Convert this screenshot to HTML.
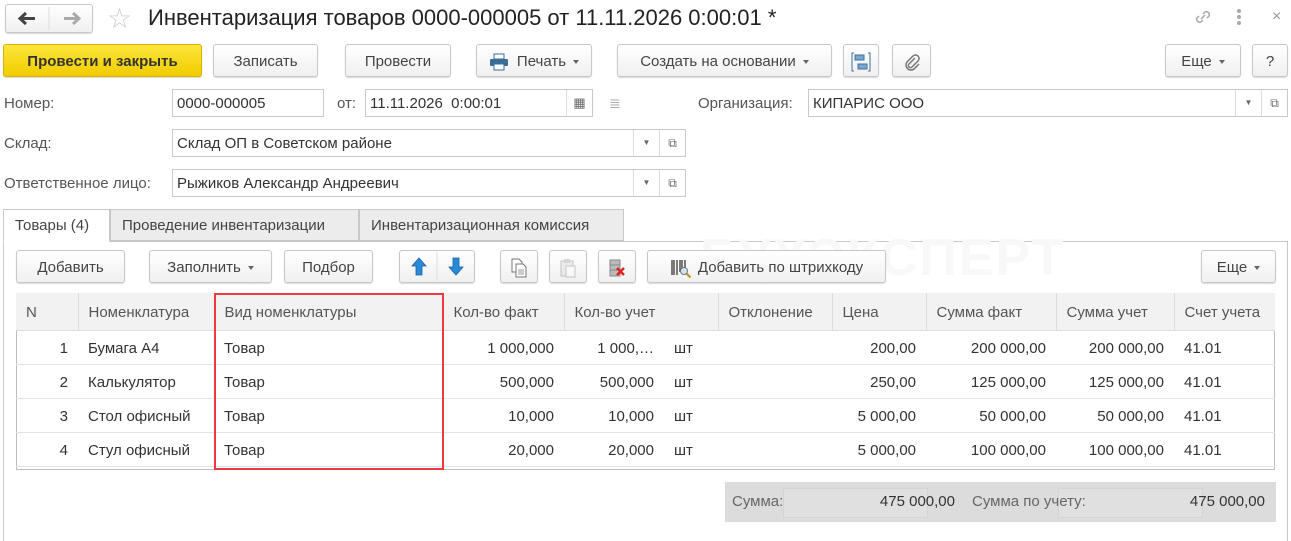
<!DOCTYPE html>
<html><head><meta charset="utf-8"><style>
*{box-sizing:border-box;margin:0;padding:0}
body{width:1291px;height:518px;overflow:hidden;background:#fff;font-family:"Liberation Sans",sans-serif;font-size:15px;color:#333;position:relative}
.a{position:absolute}
.btn{position:absolute;border:1px solid #c8c8c8;border-radius:3px;background:linear-gradient(#fff,#f0f0f0);box-shadow:0 1px 1px rgba(0,0,0,.15);color:#444;display:flex;align-items:center;justify-content:center;white-space:nowrap;padding-top:2px}
.inp{position:absolute;border:1px solid #c9c9c9;height:28px;line-height:28px;padding-left:4px;color:#333;background:#fff}
.lbl{position:absolute;color:#555;line-height:30px}
.dd{position:absolute;top:0;width:26px;height:26px;border-left:1px solid #ddd;text-align:center;font-size:8px;color:#666;line-height:26px}
.tri{display:inline-block;border-left:3px solid transparent;border-right:3px solid transparent;border-top:4px solid #666;vertical-align:middle;margin-left:7px}
table{border-collapse:collapse;position:absolute;left:16px;top:293px;width:1259px;table-layout:fixed}
td,th{height:34px;border-bottom:1px solid #e3e3e3;white-space:nowrap;overflow:hidden;padding:2px 10px 0;font-weight:normal}
th{background:#f2f2f2;color:#555;text-align:left;height:37px;border-right:1px solid #ddd;border-bottom:1px solid #ddd}
td{color:#333}
.r{text-align:right}
</style></head><body>
<!-- title -->
<div class="btn" style="left:5px;top:4px;width:88px;height:29px;padding:0">
<svg width="86" height="27"><path d="M43 2v23" stroke="#ddd"/><path d="M29 13.5H15M20 8l-6 5.5 6 5.5" stroke="#444" stroke-width="3" fill="none"/><path d="M58 13.5h14M67 8l6 5.5-6 5.5" stroke="#aaa" stroke-width="3" fill="none"/></svg></div>
<div class="a" style="left:107px;top:2px;font-size:28px;color:#ccc">☆</div>
<div class="a" style="left:148px;top:5px;font-size:22px;color:#222">Инвентаризация товаров 0000-000005 от 11.11.2026 0:00:01 *</div>
<svg class="a" style="left:1193px;top:7px" width="20" height="20"><path d="M8 12l4-4M6 9l-2 2a3 3 0 004 4l2-2M14 11l2-2a3 3 0 00-4-4l-2 2" stroke="#aaa" stroke-width="1.5" fill="none"/></svg>
<div class="a" style="left:1237px;top:9px;width:4px;height:4px;background:#aaa;border-radius:2px;box-shadow:0 6px 0 #aaa,0 12px 0 #aaa"></div>
<div class="a" style="left:1272px;top:8px;font-size:16px;color:#999">×</div>
<!-- toolbar -->
<div class="btn" style="left:3px;top:44px;width:199px;height:33px;background:linear-gradient(#fde63a,#f0cc00);border-color:#d4b400;font-weight:bold;color:#333">Провести и закрыть</div>
<div class="btn" style="left:213px;top:44px;width:105px;height:33px">Записать</div>
<div class="btn" style="left:345px;top:44px;width:106px;height:33px">Провести</div>
<div class="btn" style="left:476px;top:44px;width:116px;height:33px"><svg width="20" height="18" style="margin-right:8px"><rect x="5" y="1" width="10" height="5" fill="#fff" stroke="#3a6d9a"/><rect x="1" y="6" width="18" height="7" rx="1" fill="#3a6d9a"/><rect x="5" y="11" width="10" height="6" fill="#fff" stroke="#3a6d9a"/></svg>Печать<span class="tri"></span></div>
<div class="btn" style="left:617px;top:44px;width:215px;height:33px">Создать на основании<span class="tri"></span></div>
<div class="btn" style="left:843px;top:44px;width:36px;height:33px"><svg width="20" height="20" viewBox="0 0 20 20"><rect x="4" y="3" width="9" height="5" fill="#7aa7d1" stroke="#3d6f9c"/><rect x="7" y="12" width="9" height="5" fill="#7aa7d1" stroke="#3d6f9c"/><path d="M3 1H1v18h2M17 1h2v18h-2" stroke="#3d6f9c" fill="none"/></svg></div>
<div class="btn" style="left:892px;top:44px;width:39px;height:33px"><svg width="18" height="18"><path d="M12 5l-6 6a2 2 0 003 3l6-6a3.5 3.5 0 00-5-5l-6 6a5 5 0 007 7l5-5" stroke="#777" stroke-width="1.5" fill="none"/></svg></div>
<div class="btn" style="left:1165px;top:44px;width:76px;height:33px">Еще<span class="tri"></span></div>
<div class="btn" style="left:1252px;top:44px;width:36px;height:33px">?</div>
<!-- fields -->
<div class="lbl" style="left:4px;top:89px">Номер:</div>
<div class="inp" style="left:172px;top:89px;width:152px">0000-000005</div>
<div class="lbl" style="left:337px;top:89px">от:</div>
<div class="inp" style="left:365px;top:89px;width:228px">11.11.2026&nbsp; 0:00:01<div class="dd" style="right:0;font-size:13px">▦</div></div>
<div class="a" style="left:609px;top:95px;color:#aaa;font-size:14px">≣</div>
<div class="lbl" style="left:698px;top:89px">Организация:</div>
<div class="inp" style="left:808px;top:89px;width:480px">КИПАРИС ООО<div class="dd" style="right:26px">▼</div><div class="dd" style="right:0;font-size:12px">⧉</div></div>
<div class="lbl" style="left:4px;top:129px">Склад:</div>
<div class="inp" style="left:172px;top:129px;width:514px">Склад ОП в Советском районе<div class="dd" style="right:26px">▼</div><div class="dd" style="right:0;font-size:12px">⧉</div></div>
<div class="lbl" style="left:4px;top:169px">Ответственное лицо:</div>
<div class="inp" style="left:172px;top:169px;width:514px">Рыжиков Александр Андреевич<div class="dd" style="right:26px">▼</div><div class="dd" style="right:0;font-size:12px">⧉</div></div>
<!-- tabs -->
<div class="a" style="left:3px;top:241px;width:1285px;height:300px;border:1px solid #c8c8c8;border-bottom:none"></div>
<div class="a" style="left:700px;top:228px;font-size:52px;font-weight:bold;color:#f8f8f8;letter-spacing:2px">БУХЭКСПЕРТ</div>
<div class="a" style="left:3px;top:209px;width:107px;height:33px;border:1px solid #c8c8c8;border-bottom:1px solid #fff;background:#fff;line-height:32px;padding-left:11px;color:#444">Товары (4)</div>
<div class="a" style="left:110px;top:209px;width:249px;height:32px;border:1px solid #c8c8c8;background:#ececec;line-height:32px;padding-left:11px;color:#444">Проведение инвентаризации</div>
<div class="a" style="left:359px;top:209px;width:265px;height:32px;border:1px solid #c8c8c8;background:#ececec;line-height:32px;padding-left:11px;color:#444">Инвентаризационная комиссия</div>
<!-- table toolbar -->
<div class="btn" style="left:16px;top:250px;width:109px;height:33px">Добавить</div>
<div class="btn" style="left:149px;top:250px;width:123px;height:33px">Заполнить<span class="tri"></span></div>
<div class="btn" style="left:284px;top:250px;width:89px;height:33px">Подбор</div>
<div class="btn" style="left:399px;top:250px;width:76px;height:33px;padding:0"><svg width="74" height="31"><path d="M37 1v29" stroke="#ddd"/><path d="M19 7l-7 8h4v9h6v-9h4z" fill="#2b8ad8" stroke="#1a5e9e" stroke-width=".8"/><path d="M56 24l-7-8h4V7h6v9h4z" fill="#2b8ad8" stroke="#1a5e9e" stroke-width=".8"/></svg></div>
<div class="btn" style="left:500px;top:250px;width:38px;height:33px"><svg width="18" height="20"><path d="M2 1h7l3 3v10H2z" fill="#fff" stroke="#777"/><path d="M6 6h7l3 3v10H6z" fill="#fff" stroke="#777"/><path d="M8 12h6M8 14h6M8 16h6" stroke="#999"/></svg></div>
<div class="btn" style="left:549px;top:250px;width:38px;height:33px"><svg width="18" height="20" opacity=".45"><rect x="2" y="3" width="12" height="15" fill="#ddd" stroke="#888"/><rect x="5" y="1" width="6" height="4" fill="#aaa"/><rect x="7" y="8" width="9" height="11" fill="#fff" stroke="#888"/></svg></div>
<div class="btn" style="left:598px;top:250px;width:38px;height:33px"><svg width="20" height="20"><rect x="3" y="2" width="10" height="16" fill="#bbb" stroke="#888"/><path d="M3 7h10M3 12h10" stroke="#888"/><path d="M10 10l7 7M17 10l-7 7" stroke="#d22" stroke-width="2.5"/></svg></div>
<div class="btn" style="left:647px;top:250px;width:239px;height:33px"><svg width="22" height="20" style="margin-right:6px"><path d="M2 2v15M4 2v15M7 2v15M10 2v12M12 2v10M15 2v10" stroke="#444" stroke-width="1.4"/><circle cx="14" cy="13" r="3.5" fill="#cfe3f5" stroke="#777"/><path d="M16.5 15.5l4 4" stroke="#c8862a" stroke-width="2"/></svg>Добавить по штрихкоду</div>
<div class="btn" style="left:1201px;top:250px;width:75px;height:33px">Еще<span class="tri"></span></div>
<!-- table -->
<div class="a" style="left:16px;top:293px;width:1259px;height:177px;border:1px solid #bdbdbd"></div>
<table>
<colgroup><col style="width:62px"><col style="width:136px"><col style="width:229px"><col style="width:121px"><col style="width:100px"><col style="width:54px"><col style="width:114px"><col style="width:94px"><col style="width:130px"><col style="width:118px"><col style="width:101px"></colgroup>
<tr><th>N</th><th>Номенклатура</th><th>Вид номенклатуры</th><th>Кол-во факт</th><th colspan="2">Кол-во учет</th><th>Отклонение</th><th>Цена</th><th>Сумма факт</th><th>Сумма учет</th><th style="border-right:none">Счет учета</th></tr>
<tr><td class="r">1</td><td>Бумага А4</td><td>Товар</td><td class="r">1 000,000</td><td class="r">1 000,…</td><td>шт</td><td></td><td class="r">200,00</td><td class="r">200 000,00</td><td class="r">200 000,00</td><td>41.01</td></tr>
<tr><td class="r">2</td><td>Калькулятор</td><td>Товар</td><td class="r">500,000</td><td class="r">500,000</td><td>шт</td><td></td><td class="r">250,00</td><td class="r">125 000,00</td><td class="r">125 000,00</td><td>41.01</td></tr>
<tr><td class="r">3</td><td>Стол офисный</td><td>Товар</td><td class="r">10,000</td><td class="r">10,000</td><td>шт</td><td></td><td class="r">5 000,00</td><td class="r">50 000,00</td><td class="r">50 000,00</td><td>41.01</td></tr>
<tr><td class="r">4</td><td>Стул офисный</td><td>Товар</td><td class="r">20,000</td><td class="r">20,000</td><td>шт</td><td></td><td class="r">5 000,00</td><td class="r">100 000,00</td><td class="r">100 000,00</td><td>41.01</td></tr>
</table>
<div class="a" style="left:214px;top:293px;width:230px;height:177px;border:2px solid #f0393c"></div>
<!-- footer -->
<div class="a" style="left:725px;top:482px;width:551px;height:40px;background:#dcdcdc"></div>
<div class="a" style="left:783px;top:488px;width:145px;height:30px;background:#e0e0e0;border:1px solid #d4d4d4"></div>
<div class="a" style="left:1058px;top:488px;width:145px;height:30px;background:#e0e0e0;border:1px solid #d4d4d4"></div>
<div class="a" style="left:732px;top:493px;color:#666">Сумма:</div>
<div class="a" style="left:800px;top:493px;width:155px;text-align:right;color:#333">475 000,00</div>
<div class="a" style="left:972px;top:493px;color:#666">Сумма по учету:</div>
<div class="a" style="left:1110px;top:493px;width:155px;text-align:right;color:#333">475 000,00</div>
</body></html>
